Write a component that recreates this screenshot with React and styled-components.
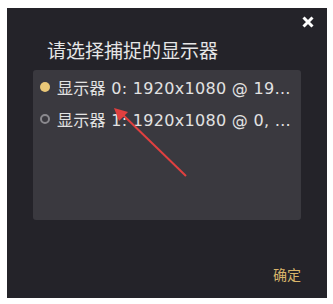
import styled, { createGlobalStyle } from 'styled-components';

const GlobalStyle = createGlobalStyle`
    body {
        margin: 0;
        background: #ffffff;
        font-family: "Noto Sans CJK SC", "Noto Sans", sans-serif;
    }
`;

const Panel = styled.div`
    position: relative;
    margin: 8px 0 0 7px;
    width: 320px;
    height: 290px;
    box-sizing: border-box;
    padding: 30px 26px 0;
    background: #242329;
    display: flex;
    flex-direction: column;
`;

const Close = styled.button`
    position: absolute;
    top: 8px;
    right: 13px;
    width: 12px;
    height: 12px;
    padding: 0;
    border: none;
    background: none;
    cursor: pointer;
    display: flex;
`;

const Title = styled.div`
    margin-left: 14px;
    height: 24px;
    line-height: 24px;
    font-size: 19px;
    color: #e6e6e6;
`;

const ListBox = styled.div`
    margin-top: 8px;
    height: 150px;
    box-sizing: border-box;
    padding: 1px 4px 0 7px;
    background: #3a393f;
    border-radius: 3px;
    display: flex;
    flex-direction: column;
`;

const Row = styled.label`
    height: 32px;
    display: flex;
    align-items: center;
    gap: 7px;
    cursor: pointer;
`;

const Radio = styled.span`
    flex: none;
    width: 10px;
    height: 10px;
    box-sizing: border-box;
    border-radius: 50%;
    background: ${p => (p.checked ? '#eac878' : 'transparent')};
    border: ${p => (p.checked ? 'none' : '2px solid #8a898e')};
`;

const RowText = styled.span`
    flex: 1;
    min-width: 0;
    font-family: "DejaVu Sans", "Noto Sans CJK SC", sans-serif;
    font-size: 16px;
    letter-spacing: 0.3px;
    color: #e2e2e2;
    white-space: nowrap;
    overflow: hidden;
    text-overflow: ellipsis;
`;

const Footer = styled.div`
    margin-top: 44px;
    display: flex;
    justify-content: flex-end;
`;

const Confirm = styled.button`
    padding: 0;
    border: none;
    background: none;
    font-family: inherit;
    font-size: 14px;
    line-height: 20px;
    color: #d8b46a;
    cursor: pointer;
`;

const Arrow = styled.svg`
    position: absolute;
    left: 0;
    top: 0;
    pointer-events: none;
`;

const monitors = [
    { id: 0, label: '显示器 0: 1920x1080 @ 1920, 0', checked: true },
    { id: 1, label: '显示器 1: 1920x1080 @ 0, 0 (主显示器)', checked: false },
];

const App = () => {
    return (
        <>
            <GlobalStyle />
            <Panel>
                <Close>
                    <svg width="12" height="12" viewBox="0 0 12 12">
                        <path d="M1.5 1.5 L10.5 10.5 M10.5 1.5 L1.5 10.5" stroke="#ffffff" strokeWidth="3" />
                    </svg>
                </Close>
                <Title>请选择捕捉的显示器</Title>
                <ListBox>
                    {monitors.map(m => (
                        <Row key={m.id} title={m.label}>
                            <Radio checked={m.checked} />
                            <RowText>{m.label}</RowText>
                        </Row>
                    ))}
                </ListBox>
                <Footer>
                    <Confirm>确定</Confirm>
                </Footer>
                <Arrow width="320" height="290" viewBox="0 0 320 290">
                    <path d="M179 168 L114 105" stroke="#e0403f" strokeWidth="2" />
                    <path d="M107 100 L121 104 L112 113 Z" fill="#e0403f" />
                </Arrow>
            </Panel>
        </>
    );
};

export default App;
